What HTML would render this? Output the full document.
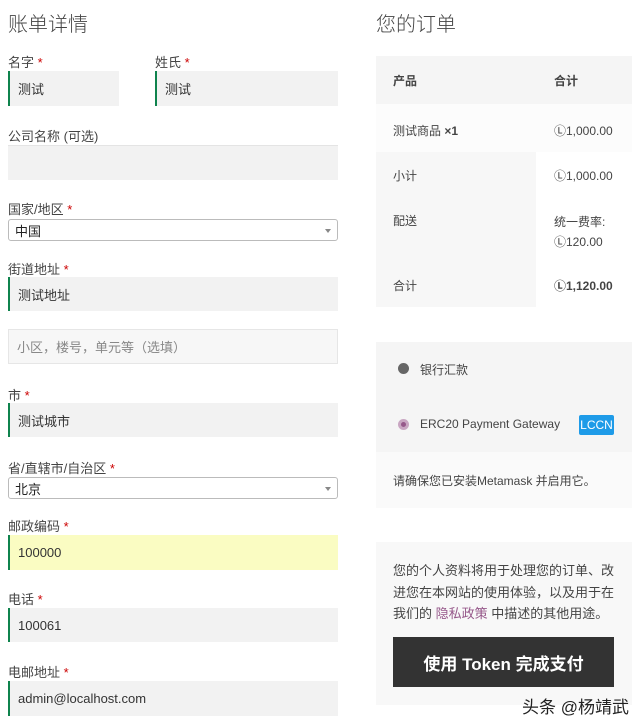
<!DOCTYPE html>
<html><head><meta charset="utf-8"><style>
*{margin:0;padding:0;box-sizing:border-box}
body{width:640px;height:726px;background:#fff;font-family:"Liberation Sans","Noto Sans CJK SC",sans-serif;color:#43454b;position:relative;overflow:hidden;font-size:13px}
.a{position:absolute}
.h{font-size:20px;color:#444;font-weight:300}
.l{font-size:13px;color:#444}
.l b{color:#c00;font-weight:normal}
.i{position:absolute;background:#f2f2f2;font-size:13px;color:#333;padding-left:8px;display:flex;align-items:center}
.g{border-left:2px solid #0f834d;}
.s{position:absolute;background:#fff;border:1px solid #bbb;border-radius:3px;font-size:13px;color:#222;padding-left:6px;display:flex;align-items:center}
.s:after{content:"";position:absolute;right:6px;top:9px;border:3px solid transparent;border-top:4px solid #888}
.t{font-size:12px;color:#444}
</style></head><body>
<div class="a h" style="left:8px;top:8px">账单详情</div>
<div class="a l" style="left:8px;top:52px">名字 <b>*</b></div>
<div class="a l" style="left:155px;top:52px">姓氏 <b>*</b></div>
<div class="i g" style="left:8px;top:71px;width:111px;height:35px">测试</div>
<div class="i g" style="left:155px;top:71px;width:183px;height:35px">测试</div>
<div class="a l" style="left:8px;top:126px">公司名称 (可选)</div>
<div class="i" style="left:8px;top:145px;width:330px;height:35px;border-top:1px solid #e4e4e4"></div>
<div class="a l" style="left:8px;top:199px">国家/地区 <b>*</b></div>
<div class="s" style="left:8px;top:219px;width:330px;height:22px">中国</div>
<div class="a l" style="left:8px;top:259px">街道地址 <b>*</b></div>
<div class="i g" style="left:8px;top:277px;width:330px;height:34px">测试地址</div>
<div class="i" style="left:8px;top:329px;width:330px;height:35px;background:#f7f7f7;border:1px solid #e6e6e6;color:#888">小区，楼号，单元等（选填）</div>
<div class="a l" style="left:8px;top:385px">市 <b>*</b></div>
<div class="i g" style="left:8px;top:403px;width:330px;height:34px">测试城市</div>
<div class="a l" style="left:8px;top:458px">省/直辖市/自治区 <b>*</b></div>
<div class="s" style="left:8px;top:477px;width:330px;height:22px">北京</div>
<div class="a l" style="left:8px;top:516px">邮政编码 <b>*</b></div>
<div class="i g" style="left:8px;top:535px;width:330px;height:35px;background:#fafcc2">100000</div>
<div class="a l" style="left:8px;top:589px">电话 <b>*</b></div>
<div class="i g" style="left:8px;top:608px;width:330px;height:34px">100061</div>
<div class="a l" style="left:8px;top:662px">电邮地址 <b>*</b></div>
<div class="i g" style="left:8px;top:681px;width:330px;height:35px">admin@localhost.com</div>

<div class="a h" style="left:376px;top:8px">您的订单</div>
<div class="a" style="left:376px;top:56px;width:256px;height:48px;background:#f5f5f5"></div>
<div class="a" style="left:376px;top:104px;width:256px;height:48px;background:#fcfcfc"></div>
<div class="a" style="left:376px;top:152px;width:160px;height:155px;background:#f7f7f7"></div>
<div class="a t" style="left:393px;top:72px;font-weight:bold">产品</div>
<div class="a t" style="left:554px;top:72px;font-weight:bold">合计</div>
<div class="a t" style="left:393px;top:122px">测试商品 <b>×1</b></div>
<div class="a t" style="left:554px;top:122px">Ⓛ1,000.00</div>
<div class="a t" style="left:393px;top:167px">小计</div>
<div class="a t" style="left:554px;top:167px">Ⓛ1,000.00</div>
<div class="a t" style="left:393px;top:212px">配送</div>
<div class="a t" style="left:554px;top:212px;line-height:20px">统一费率:<br>Ⓛ120.00</div>
<div class="a t" style="left:393px;top:277px">合计</div>
<div class="a t" style="left:554px;top:277px;font-weight:bold">Ⓛ1,120.00</div>

<div class="a" style="left:376px;top:342px;width:256px;height:110px;background:#f5f5f5"></div>
<div class="a" style="left:376px;top:452px;width:256px;height:56px;background:#fafafa"></div>
<div class="a" style="left:398px;top:363px;width:11px;height:11px;border-radius:50%;background:#666"></div>
<div class="a t" style="left:420px;top:361px">银行汇款</div>
<div class="a" style="left:398px;top:419px;width:11px;height:11px;border-radius:50%;background:#96588a;border:3px solid #c9a6c2"></div>
<div class="a t" style="left:420px;top:417px">ERC20 Payment Gateway</div>
<div class="a" style="left:579px;top:415px;width:35px;height:20px;background:#1e9be8;color:#fff;font-size:12px;display:flex;align-items:center;justify-content:center;border-radius:2px">LCCN</div>
<div class="a t" style="left:393px;top:472px">请确保您已安装Metamask 并启用它。</div>

<div class="a" style="left:376px;top:542px;width:256px;height:163px;background:#f8f8f8"></div>
<div class="a" style="left:393px;top:560px;line-height:21.5px;width:226px;font-size:13px;color:#444">您的个人资料将用于处理您的订单、改进您在本网站的使用体验，以及用于在我们的 <span style="color:#96588a">隐私政策</span> 中描述的其他用途。</div>
<div class="a" style="left:393px;top:637px;width:221px;height:50px;background:#333;color:#fff;font-size:17px;font-weight:bold;display:flex;align-items:center;justify-content:center">使用 Token 完成支付</div>
<div class="a" style="left:522px;top:693px;font-size:17px;color:#222">头条 @杨靖武</div>
</body></html>
